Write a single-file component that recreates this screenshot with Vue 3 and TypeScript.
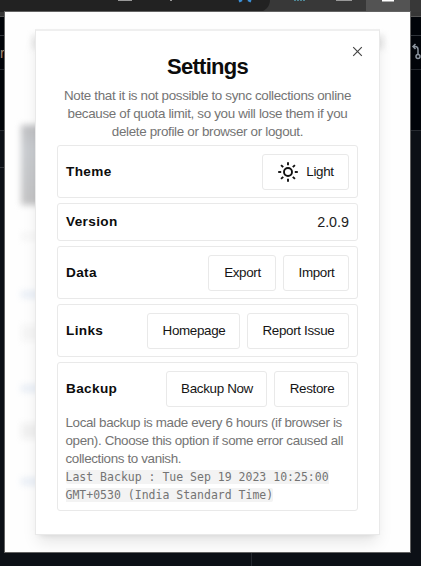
<script setup lang="ts">
interface Row {
  title: string
  value?: string
  buttons: { label: string; width: number; sun?: boolean }[]
}

const rows: Row[] = [
  { title: 'Theme', buttons: [{ label: 'Light', width: 87, sun: true }] },
  { title: 'Version', value: '2.0.9', buttons: [] },
  { title: 'Data', buttons: [{ label: 'Export', width: 68 }, { label: 'Import', width: 66 }] },
  { title: 'Links', buttons: [{ label: 'Homepage', width: 93 }, { label: 'Report Issue', width: 102 }] },
  { title: 'Backup', buttons: [{ label: 'Backup Now', width: 101 }, { label: 'Restore', width: 75 }] },
]
const rays = [0, 45, 90, 135, 180, 225, 270, 315]
</script>

<template>
  <div class="screen">
    <div class="toolbar">
      <i class="address"></i>
      <i class="tab"></i>
      <svg class="tools" width="421" height="3" viewBox="0 0 421 3">
        <path d="M118 0h14M171 0v1M336 0h16" stroke="#999" stroke-width="2" />
        <path d="M239 1.5l3-1.5M248 0l3 1.5" stroke="#3d91d8" stroke-width="2.5" />
        <path d="M294 0h12" stroke="#4f8795" stroke-width="2" stroke-dasharray="2 1" />
        <path d="M382 0h12" stroke="#fff" stroke-width="3" />
      </svg>
    </div>
    <div class="site">
      <div class="strip"></div>
      <div class="nav"></div>
      <div class="head">
        <span class="letter">r</span>
        <svg class="branch" width="10" height="18" viewBox="0 0 10 18" fill="none" stroke="#8b949e" stroke-width="1.5">
          <path d="M4.5 1L2 3.5L4.5 6M2 3.5h2q3 0 3 3v5" />
          <circle cx="7" cy="13.5" r="2" />
        </svg>
      </div>
      <div class="sub"></div>
      <div class="body"><div class="crumb"></div><div class="columns"></div></div>
    </div>

    <div class="popup">
      <div class="backdrop">
        <i class="smudge block"></i>
        <i class="smudge faint a"></i>
        <i class="smudge blue b"></i>
        <i class="smudge faint c"></i>
        <i class="smudge blue d"></i>
        <i class="smudge faint e"></i>
        <i class="smudge blue f"></i>
        <i class="smudge dark g"></i>
        <i class="smudge dark h"></i>
      </div>
      <section class="dialog">
        <svg class="close" width="11" height="11" viewBox="0 0 11 11">
          <path d="M1.2 1.2l8.6 8.6M9.8 1.2L1.2 9.8" stroke="#444" stroke-width="1.15" />
        </svg>
        <h1>Settings</h1>
        <p class="note">
          <span>Note that it is not possible to sync collections online</span><br />
          <span>because of quota limit, so you will lose them if you</span><br />
          <span>delete profile or browser or logout.</span>
        </p>
        <div class="cards">
          <div v-for="row in rows" :key="row.title" class="card" :class="row.title.toLowerCase()">
            <div class="line">
              <h2>{{ row.title }}</h2>
              <span v-if="row.value" class="value">{{ row.value }}</span>
              <div v-else class="buttons">
                <button v-for="b in row.buttons" :key="b.label" :style="{ width: b.width + 'px' }">
                  <svg v-if="b.sun" class="sun" width="20" height="20" viewBox="0 0 20 20" fill="none" stroke="#111" stroke-width="1.9">
                    <circle cx="10" cy="10" r="4" />
                    <path v-for="r in rays" :key="r" d="M10 0.2v3" :transform="`rotate(${r} 10 10)`" />
                  </svg>
                  <span>{{ b.label }}</span>
                </button>
              </div>
            </div>
            <p v-if="row.title === 'Backup'" class="info">
              <span>Local backup is made every 6 hours (if browser is</span><br />
              <span>open). Choose this option if some error caused all</span><br />
              <span>collections to vanish.</span><br />
              <code>Last Backup : Tue Sep 19 2023 10:25:00<br />GMT+0530 (India Standard Time)</code>
            </p>
          </div>
        </div>
      </section>
    </div>
  </div>
</template>

<style>
body {
  margin: 0;
  overflow: hidden;
}
</style>

<style scoped>
* {
  box-sizing: border-box;
}
.screen {
  position: relative;
  width: 421px;
  height: 566px;
  overflow: hidden;
  background: #0c1016;
  font-family: "Liberation Sans", Arial, sans-serif;
}
.toolbar {
  position: relative;
  display: flex;
  justify-content: space-between;
  height: 12px;
  background: #383838;
}
.address {
  width: 270px;
  background: #222;
  border-bottom-right-radius: 12px;
}
.tab {
  width: 44px;
  margin-right: 11px;
  background: #535353;
}
.tools {
  position: absolute;
  left: 0;
  top: 0;
}
.strip {
  height: 5px;
  background: #363636;
  border-bottom: 1px solid #555;
}
.nav {
  height: 19px;
  background: #010409;
  border-bottom: 1px solid #30343a;
}
.head {
  display: flex;
  justify-content: space-between;
  height: 34px;
  background: #010409;
  border-bottom: 1px solid #22262c;
}
.letter {
  margin: 8px 0 0 0;
  color: #a58b73;
  font-size: 14px;
  line-height: 18px;
}
.branch {
  margin: 7px 0 0 0;
}
.sub {
  height: 61px;
  background: #010409;
  border-bottom: 1px solid #272b31;
}
.crumb {
  height: 37px;
  width: 10px;
  border-bottom: 1px solid #30343a;
}
.columns {
  width: 252px;
  height: 399px;
  border-right: 1px solid #24282f;
}
.popup {
  position: absolute;
  left: 4px;
  top: 11px;
  width: 407px;
  height: 542px;
  border: 1px solid #636363;
  background: #fefefe;
  overflow: hidden;
}
.backdrop {
  position: absolute;
  inset: 0;
}
.smudge {
  position: absolute;
  left: 16px;
  width: 30px;
  height: 7px;
  filter: blur(3px);
}
.block {
  top: 113px;
  height: 80px;
  background: linear-gradient(#bfc0c2, #c9ccd0 30%, #c4c4c5);
}
.faint { background: #f6f6f6; }
.blue { background: #e8eef6; }
.a { top: 221px; }
.b { top: 279px; }
.c { top: 313px; height: 16px; }
.d { top: 373px; }
.e { top: 411px; height: 16px; background: #f1f1f1; }
.f { top: 466px; }
.dark {
  background: #e4e4e4;
  width: 12px;
  height: 14px;
}
.g { left: 27px; top: 23px; }
.h { left: 367px; top: 23px; }
.dialog {
  position: absolute;
  left: 30px;
  top: 17px;
  width: 345px;
  height: 506px;
  padding: 24px 21px 20px;
  border: 1px solid #e9e9e9;
  border-top: 2px solid #efefef;
  background: #fff;
  box-shadow: 0 10px 15px -3px rgba(0, 0, 0, 0.1), 0 4px 6px -4px rgba(0, 0, 0, 0.1);
}
.close {
  position: absolute;
  right: 16px;
  top: 15px;
}
h1 {
  margin: 0;
  text-align: center;
  font-size: 22px;
  line-height: 24px;
  letter-spacing: -0.75px;
  color: #0c0c0c;
}
p {
  margin: 0;
  color: #747474;
  font-size: 13.4px;
  letter-spacing: -0.33px;
  line-height: 18px;
  white-space: nowrap;
}
.note {
  margin-top: 8px;
  text-align: center;
}
.info {
  margin-left: -0.5px;
  letter-spacing: -0.36px;
}
.cards {
  display: flex;
  flex-direction: column;
  gap: 5px;
  margin-top: 4px;
}
.card {
  height: 53px;
  padding: 0 8px;
  border: 1px solid #e9e9e9;
  border-radius: 3px;
}
.version { height: 38px; }
.backup { height: 149px; }
.line {
  display: flex;
  align-items: center;
  justify-content: space-between;
  height: 51px;
}
.version .line { height: 36px; }
h2 {
  margin: 0;
  color: #0c0c0c;
  font-size: 13.6px;
  line-height: 18px;
  letter-spacing: 0.35px;
}
.value {
  color: #222;
  font-size: 14.3px;
}
.buttons {
  display: flex;
  gap: 7px;
}
button {
  display: flex;
  align-items: center;
  justify-content: center;
  gap: 8px;
  height: 36px;
  padding: 0 0 0 1px;
  border: 1px solid #e9e9e9;
  border-radius: 3px;
  background: #fff;
  color: #151515;
  font-family: inherit;
  font-size: 13.4px;
  letter-spacing: -0.33px;
  white-space: nowrap;
}
code {
  padding: 0;
  background: #f3f3f3;
  border-radius: 2px;
  font-family: "DejaVu Sans Mono", monospace;
  font-size: 11.5px;
  letter-spacing: 0;
}
</style>
